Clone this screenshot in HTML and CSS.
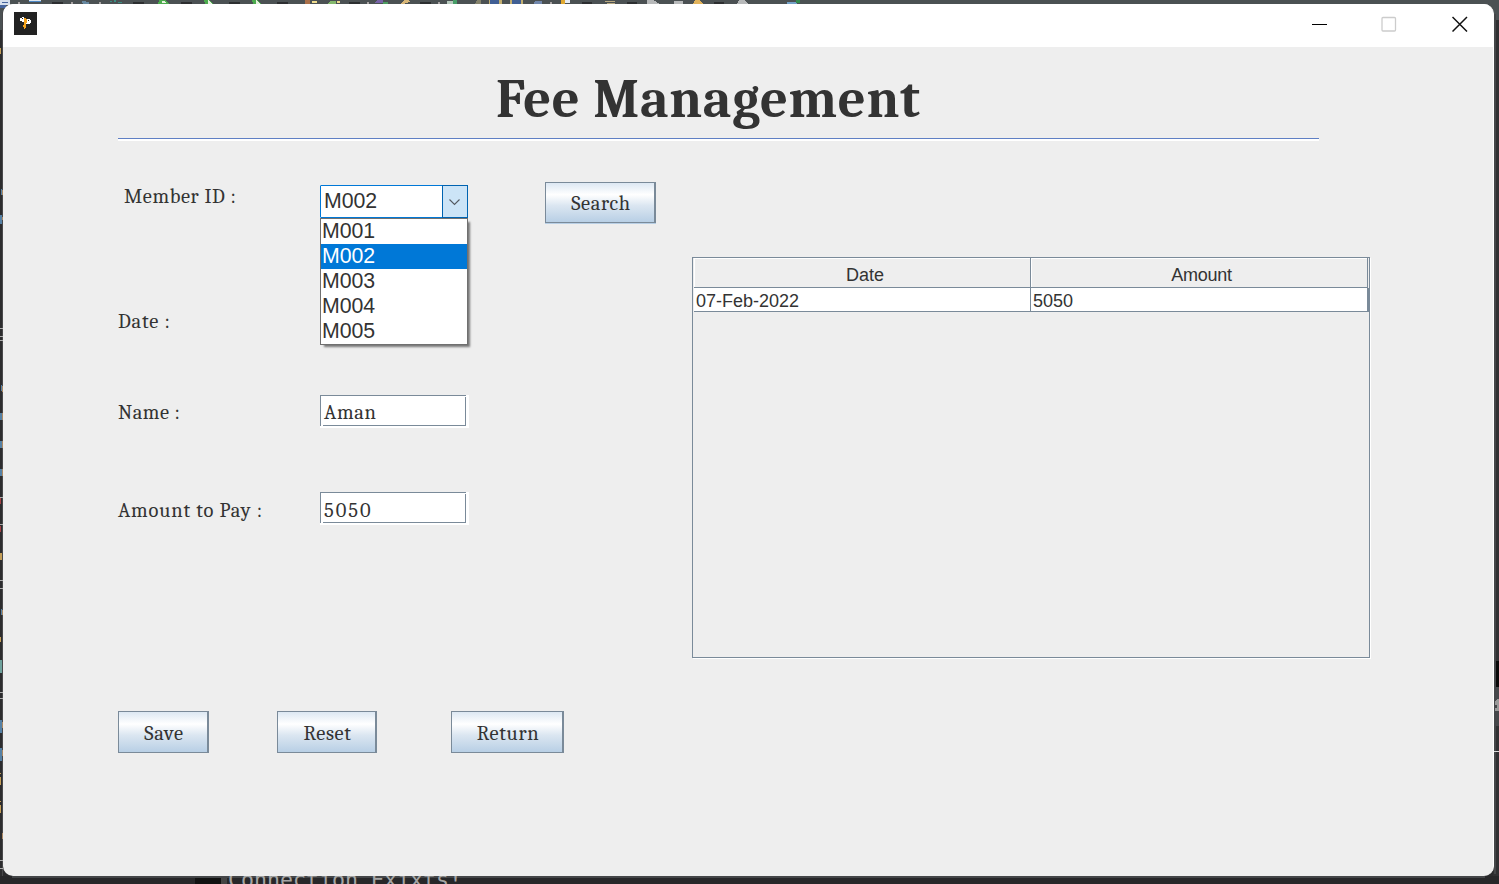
FILE: index.html
```html
<!DOCTYPE html>
<html lang="en">
<head>
<meta charset="utf-8">
<title>Fee Management</title>
<link rel="stylesheet" href="styles.css">
</head>
<body>
<div class="desktop">
  <svg class="backdrop" width="1499" height="884" aria-hidden="true" shape-rendering="crispEdges">
    <rect width="1499" height="32" fill="#4b5153"/>
    <rect y="30" width="4" height="854" fill="#2c2c2e"/>
    <rect x="2" y="12" width="1" height="865" fill="#48484a"/>
    <g fill="#2c2e30"><path d="M52 2h11v2H52zM133 2h11v2h-11zM181 2h11v2h-11zM229 2h11v2h-11zM277 2h11v2h-11zM349 2h11v2h-11zM420 2h11v2h-11zM582 2h10v2h-10zM627 2h10v2h-10zM714 2h10v2h-10z"/></g>
    <path d="M0 0h10v5H0z" fill="#d5dfed"/><path d="M2 2h6v1H2zM0 5h6v3H0z" fill="#46659f"/>
    <path d="M29 0h12v1H29z" fill="#dce5ed"/><path d="M29 1h12v1H29z" fill="#4b86c5"/>
    <path d="M82 1h4v1h3v2h-6z" fill="#6788a0"/><path d="M110 1h2v1h-2zM114 0h2v2h-2zM118 2h4v1h-4z" fill="#398f83"/>
    <path d="M159 0h7l3 4h-11zM204 0h6l3 4h-8zM252 0h6l3 4h-8z" fill="#4bab4d"/>
    <path d="M162 1h2l2 2h-4zM208 0l4 4h-4zM256 0l4 4h-4z" fill="#e7f1df"/>
    <path d="M305 0h5v4h-5z" fill="#aa704a"/><path d="M312 1h5v2h-5zM337 1h3v2h-3z" fill="#efdc8d"/>
    <path d="M330 1h6v3h-8z" fill="#84b96d"/><path d="M377 0h6v3h-8z" fill="#7763a7"/><path d="M383 2h5v2h-5z" fill="#4d9d62"/>
    <path d="M404 0h5l1 2-7 2h-3z" fill="#d7b677"/><path d="M447 1h10v3h-10z" fill="#b6c9bd"/><path d="M453 0h4v4h-4z" fill="#479d67"/>
    <path d="M477 0h4v4h-6z" fill="#85836c"/><path d="M489 0h13v4h-13zM510 0h13v4h-13z" fill="#c2ae70"/><path d="M490 0h9v4h-9zM512 0h9v4h-9z" fill="#405f94"/>
    <path d="M535 1h7v3h-8z" fill="#7187ac"/><path d="M561 0h4v4h-4z" fill="#e1a931"/><path d="M565 0h5v3h-5z" fill="#e7edf5"/>
    <path d="M605 1h10v1h-10zM607 3h8v1h-8z" fill="#b7a881"/><path d="M647 0h6l7 4h-13zM674 1h9v3h-9zM739 0h5l4 4h-11z" fill="#b7b9ba"/>
    <path d="M695 0h4l5 4h-11z" fill="#e1b35c"/><path d="M787 2h10v2h-10z" fill="#73a1c7"/><path d="M796 0h4v3h-4z" fill="#318a4c"/>
    <path d="M71 2h2v2h-2zM99 2h2v2h-2zM18 2h2v2h-2zM367 2h2v2h-2zM438 2h2v2h-2zM550 2h2v2h-2z" fill="#a8a4a4"/>
    <g fill="#5681a5"><path d="M1 189h1v6H1zM0 215h2v9H0zM1 385h1v6H1zM0 413h2v7H0zM0 441h2v7H0zM0 469h2v7H0zM1 609h1v6H1zM0 720h2v13H0zM0 748h2v13H0z"/></g>
    <path d="M0 660h2v13H0z" fill="#6fa29d"/>
    <g fill="#c49e58"><path d="M0 48h1v6H0zM0 553h2v7H0zM0 637h1v5H0zM0 773h1v1H0zM0 777h1v8H0zM0 801h1v1H0zM0 805h1v8H0z"/></g>
    <g fill="#ac8964"><path d="M2 190h1v5H2zM2 217h1v3H2zM2 386h1v6H2zM2 413h1v7H2zM2 441h1v7H2zM2 469h1v7H2zM2 610h1v5H2zM2 833h1v6H2zM2 722h1v6H2zM2 750h1v6H2z"/></g>
    <path d="M0 498h1v6H0zM0 526h1v6H0z" fill="#a44145"/>
    <path d="M0 328h3v1H0zM0 336h3v1H0zM0 340h3v1H0zM0 497h3v1H0zM0 524h3v1H0zM0 580h3v1H0zM0 588h3v1H0zM0 692h3v1H0zM0 698h3v1H0zM0 860h3v1H0zM0 868h3v1H0z" fill="#aaa"/>
    <rect x="1493" y="20" width="6" height="864" fill="#303032"/>
    <rect x="1494" y="14" width="2" height="860" fill="#444648"/>
    <path d="M1496 661h3v26h-3z" fill="#080808"/><path d="M1494 687h5v39h-5z" fill="#45474a"/>
    <path d="M1495 702l2-3h2v12h-4v-3h2v-3h-2z" fill="#999"/><path d="M1494 751h5v1h-5z" fill="#ddd"/>
    <rect y="876" width="1499" height="8" fill="#272729"/>
    <rect x="12" y="876" width="1473" height="2" fill="#444648"/>
    <rect x="195" y="878" width="26" height="6" fill="#111"/><rect x="221" y="878" width="6" height="6" fill="#444"/>
  </svg>
  <div class="console">Connection Exixts!</div>

  <div class="window">
    <div class="titlebar">
      <svg class="app-icon" width="23" height="23" viewBox="0 0 23 23" shape-rendering="crispEdges"><path fill="#222" d="M0 0h23v23H0z"/><path fill="#fff" d="M6 6h2V5h2v2h1v2h1V7h4v1h1v3h-1v1h-4v-2H8v-1H6z"/><path fill="#222" d="M8 6h1v1H8zM14 8h1v1h-1z"/><path fill="#f5a31a" d="M10 6h2v1h1v4h-1v5h-1v1h-1v-2H9v-2h1z"/></svg>
      <div class="controls">
        <svg width="16" height="16" viewBox="0 0 16 16"><path d="M0 8.500h15" stroke="#000"/></svg>
        <svg width="16" height="16" viewBox="0 0 16 16"><rect x="1" y="1.500" width="13.500" height="13.500" rx="1" fill="none" stroke="#ccc" stroke-width="1.300"/></svg>
        <svg width="16" height="16" viewBox="0 0 16 16"><path d="M.5 1l14.500 14.500M15 1L.5 15.500" stroke="#111" stroke-width="1.500"/></svg>
      </div>
    </div>

    <main class="content">
      <h1 class="title"><span>Fee Management</span></h1>
      <div class="body">
        <form class="form">
          <div class="row row-member">
            <label class="label label-member">Member ID :</label>
            <div class="combo">
              <span class="combo-value">M002</span>
              <span class="combo-arrow"><svg width="12" height="8" viewBox="0 0 12 8"><path d="M.5 1.500l5 5 5-5" fill="none" stroke="#555b62" stroke-width="1.100"/></svg></span>
              <ul class="popup">
                <li>M001</li>
                <li class="selected">M002</li>
                <li>M003</li>
                <li>M004</li>
                <li>M005</li>
              </ul>
            </div>
            <button type="button" class="btn btn-search"><span>Search</span></button>
          </div>
          <div class="row row-date"><label class="label label-date">Date :</label></div>
          <div class="row row-name"><label class="label label-name">Name :</label><div class="field"><span class="value-name">Aman</span></div></div>
          <div class="row row-amount"><label class="label label-amount">Amount to Pay :</label><div class="field"><span class="value-amount">5050</span></div></div>
          <div class="actions">
            <button type="button" class="btn btn-save"><span>Save</span></button>
            <button type="button" class="btn btn-reset"><span>Reset</span></button>
            <button type="button" class="btn btn-return"><span>Return</span></button>
          </div>
        </form>
        <div class="table">
          <div class="tr head"><div>Date</div><div class="amount-head">Amount</div></div>
          <div class="tr"><div>07-Feb-2022</div><div>5050</div></div>
        </div>
      </div>
    </main>
  </div>
</div>
</body>
</html>
```
FILE: styles.css
```css
* { box-sizing: border-box; }
body { margin: 0; background: #2b2b2d; color: #333; overflow: hidden; font-family: "Liberation Sans", Arial, sans-serif; }
.desktop { position: relative; width: 1499px; height: 884px; padding: 4px 5px 8px 3px; overflow: hidden; }
.backdrop { position: absolute; left: 0; top: 0; }
.console { position: absolute; left: 228px; top: 867px; font: 21.6px/25px "DejaVu Sans Mono", monospace; color: #a5a5a5; white-space: nowrap; }
.window { position: relative; width: 1491px; height: 872px; border-radius: 10px; background: #eee; overflow: hidden; border-right: 1px solid #fff; }
.titlebar { height: 43px; background: #fff; display: flex; justify-content: space-between; padding: 8px 25px 0 11px; }
.controls { display: flex; gap: 53px; padding-top: 4px; }
.controls svg:last-child { margin-left: 2px; }

.content { padding-left: 115px; }
.title { margin: 0; width: 1201px; height: 92px; border-bottom: 1px solid #5f7fc4; box-shadow: 0 2px 0 #fff; padding: 22px 0 0 378px; font: bold 54.5px/62px Cambria, Caladea, "DejaVu Serif Condensed", "DejaVu Serif", serif; white-space: nowrap; letter-spacing: 0.7px; }
.body { display: flex; align-items: flex-start; padding-top: 43px; }

.form { width: 574px; font: 20.5px/24px Cambria, Caladea, "DejaVu Serif Condensed", "DejaVu Serif", serif; letter-spacing: 0.65px; }
.row { display: flex; align-items: flex-start; }
.label { width: 202px; white-space: nowrap; }
.row-member { height: 41px; }
.label-member { padding: 3px 0 0 6px; letter-spacing: 0.6px; }
.label-date { letter-spacing: 0.8px; }
.label-name { letter-spacing: 0.5px; }
.label-amount { letter-spacing: 0.8px; }
.value-amount { letter-spacing: 2px; }
.row-date { height: 24px; margin-top: 86px; padding-top: 1px; }
.row-name { height: 33px; margin-top: 62px; }
.row-amount { height: 33px; margin-top: 64px; }
.row-name .label { padding-top: 6px; }
.row-amount .label { padding-top: 7px; }

.combo { position: relative; width: 148px; height: 33px; margin-top: 3px; display: flex; border: 1px solid #0078d7; background: #fff; font: 21.3px/31px "Liberation Sans", Arial, sans-serif; letter-spacing: -0.1px; border-radius: 1px; }
.combo-value { flex: 1; padding-left: 3px; }
.combo-arrow { width: 26px; margin: -1px; border: 1px solid #0063b1; background: #cce4f7; display: flex; align-items: center; justify-content: center; }
.popup { position: absolute; left: -1px; top: 32px; width: 148px; height: 127px; margin: 0; padding: 0; list-style: none; border: 1px solid #707070; background: #fff; box-shadow: 3px 3px 2px -1px #777; line-height: 25px; }
.popup li { height: 25px; padding-left: 1px; }
.popup .selected { background: #0078d7; color: #fff; }

.btn { height: 42px; margin: 0; padding: 3px 0 0 2px; border: 1px solid #7a8a99; border-right-width: 2px; border-radius: 0; background: linear-gradient(#dde8f3 0%, #fff 30%, #dbe6f1 58%, #b8cfe5 100%); color: #333; font: inherit; letter-spacing: inherit; }
.btn-search { width: 111px; height: 41px; margin-left: 77px; box-shadow: 0 1px 0 #b8cfe5; }
.field { width: 149px; height: 33px; background: linear-gradient(#7a8a99, #7a8a99) 0 0 / 146px 1px no-repeat, linear-gradient(#7a8a99, #7a8a99) 0 0 / 1px 31px no-repeat, linear-gradient(#7a8a99, #7a8a99) 145px 2px / 1px 29px no-repeat, linear-gradient(#7a8a99, #7a8a99) 3px 30px / 143px 1px no-repeat, #fff; padding: 6px 0 0 4px; }
.row-amount .field { padding-top: 7px; }
.actions { display: flex; margin-top: 186px; }
.btn-save { width: 91px; }
.btn-reset { width: 100px; margin-left: 68px; }
.btn-return { width: 113px; margin-left: 74px; }

.table { width: 678px; height: 401px; margin-top: 75px; border: 1px solid #7a8a99; box-shadow: 1px 1px 0 #fff; font-size: 18px; }
.tr { display: grid; grid-template-columns: 337px 337px; grid-template-rows: 100%; width: 674px; margin-left: 1px; height: 24px; line-height: 26px; }
.tr > div { border-right: 1px solid #7a8a99; border-bottom: 1px solid #7a8a99; background: #fff; padding-left: 2px; }
.tr:last-child { box-shadow: 1px 0 0 #7a8a99; }
.head { height: 30px; line-height: 34px; }
.head > div { background: #eee; text-align: center; padding: 0 0 0 6px; box-shadow: inset 1px 1px 0 #fff; }
.head > .amount-head { letter-spacing: -0.25px; padding-left: 5px; }
```
